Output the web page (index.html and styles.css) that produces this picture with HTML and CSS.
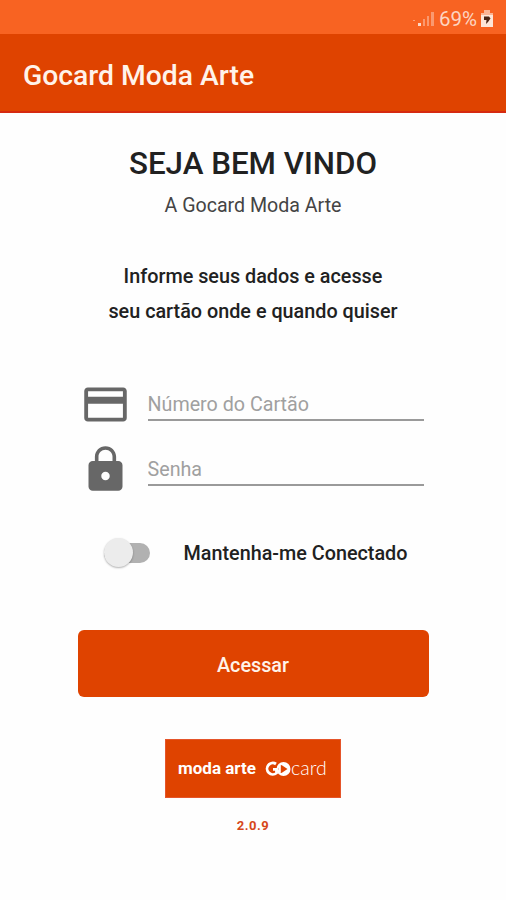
FILE: index.html
```html
<!DOCTYPE html>
<html lang="pt-BR">
<head>
    <meta charset="UTF-8">
    <meta name="viewport" content="width=device-width, initial-scale=1.0">
    <title>Gocard Moda Arte</title>
    <link rel="stylesheet" href="styles.css">
</head>
<body>
    <div class="status">
        <svg class="signal" width="24" height="18" viewBox="0 0 24 18">
            <path d="M1 10h2v1H1z" opacity=".4"/>
            <path d="M6 13h3v3H6z" opacity=".75"/>
            <path d="M11 9h2v7h-2zM15 6h2v10h-2zM19 2h3v14h-3z" opacity=".35"/>
        </svg>
        <span class="percent">69%</span>
        <svg class="battery" width="12" height="18" viewBox="0 0 12 18">
            <path d="M3 0h6v3h3v14H0V3h3z" fill="#fbb595"/>
            <path d="M0 5h12v12H0z" fill="#fde6d8"/>
            <path d="M3 6.500h5l1.500 2L7 12l-2 2 .5-4H3z" fill="#4a2414"/>
        </svg>
    </div>
    <header class="topbar">
        <h1>Gocard Moda Arte</h1>
    </header>
    <main class="container">
        <h2 class="welcome">SEJA BEM VINDO</h2>
        <p class="sub">A Gocard Moda Arte</p>
        <p class="info">Informe seus dados e acesse<br>seu cartão onde e quando quiser</p>
        <form class="login">
            <div class="field">
                <svg width="51" height="51" viewBox="0 0 24 24">
                    <path fill-rule="evenodd" d="M3.700 4h16.600c.95 0 1.700.75 1.700 1.700v12.600c0 .95-.75 1.700-1.700 1.700H3.700C2.750 20 2 19.250 2 18.300V5.700C2 4.750 2.750 4 3.700 4zM3.800 5.800v2.600h16.400V5.800zM3.800 11.700v6.500h16.400v-6.500z"/>
                </svg>
                <input type="text" placeholder="Número do Cartão" class="card-number">
            </div>
            <div class="field">
                <svg width="51" height="51" viewBox="0 0 24 24">
                    <path d="M18 8h-1V6c0-2.760-2.240-5-5-5S7 3.240 7 6v2H6c-1.100 0-2 .9-2 2v10c0 1.100.9 2 2 2h12c1.100 0 2-.9 2-2V10c0-1.100-.9-2-2-2zm-6 9c-1.100 0-2-.9-2-2s.9-2 2-2 2 .9 2 2-.9 2-2 2zm3.300-9H8.700V6c0-1.820 1.480-3.300 3.300-3.300s3.300 1.480 3.300 3.300v2z"/>
                </svg>
                <input type="password" placeholder="Senha" class="password">
            </div>
            <label class="keep">
                <span class="switch"><span class="thumb"></span></span>
                <span class="keep-text">Mantenha-me Conectado</span>
            </label>
            <button type="button">Acessar</button>
        </form>
        <div class="logo">
            <span class="brand">moda arte</span>
            <svg width="27" height="16" viewBox="0 0 27 16">
                <path d="M12 3A5.700 5.700 0 1 0 12.500 12V8.300H9" fill="none" stroke="#fff" stroke-width="2.800"/>
                <circle cx="19.500" cy="8" r="7" fill="#fff"/>
                <path d="M14.500 8a4.500 4.500 0 0 1 3-4v8a4.500 4.500 0 0 1-3-4zM17.500 4l6 4-6 4z" fill="#df4300"/>
                <path d="M14.800 4.500h2v7h-2z" fill="#fff"/>
            </svg>
            <span class="card">card</span>
        </div>
        <p class="version">2.0.9</p>
    </main>
</body>
</html>
```
FILE: styles.css
```css
*{
    box-sizing: border-box;
}
body{
    margin: 0;
    height: 900px;
    background: #fefefe;
    font-family: Roboto, "Liberation Sans", sans-serif;
    color: #212121;
}
h1,h2,p{
    margin: 0;
}
.status{
    height: 34px;
    background: #f86322;
    display: flex;
    align-items: center;
    justify-content: flex-end;
    padding: 4px 13px 0 0;
    color: #fdd5c0;
    fill: #fff;
}
.percent{
    font-size: 20.5px;
    line-height: 30px;
    margin: 0 4px 0 3px;
}
.topbar{
    height: 79px;
    background: #df4300;
    border-bottom: 2px solid #d62a10;
    padding: 5px 23px 0;
    display: flex;
    align-items: center;
    color: #fff3ea;
}
.topbar h1{
    font-size: 28.3px;
    font-weight: 500;
}
.container{
    display: flex;
    flex-direction: column;
    align-items: center;
    text-align: center;
    padding-top: 33px;
}
.welcome{
    font-size: 31.3px;
    font-weight: 500;
    line-height: 36px;
}
.sub{
    font-size: 19.6px;
    font-weight: 400;
    line-height: 24px;
    margin-top: 12px;
    color: #444;
}
.info{
    font-size: 19.8px;
    font-weight: 500;
    line-height: 35px;
    margin-top: 41px;
}
.login{
    width: 351px;
    margin-top: 50px;
}
.field{
    display: flex;
    align-items: center;
    height: 51px;
    margin: 0 5px 14px 2px;
}
.field svg{
    fill: #676767;
    flex: none;
}
.field input{
    width: 276px;
    height: 33px;
    margin-left: 17px;
    padding: 1px 0 0;
    border: 0;
    border-bottom: 2px solid #9a9a9a;
    outline: 0;
    background: none;
    font-family: inherit;
    font-size: 19.7px;
}
.field input::placeholder{
    color: #a0a0a0;
}
.keep{
    display: flex;
    align-items: center;
    height: 30px;
    margin: 43px 0 0 26px;
}
.switch{
    position: relative;
    width: 46px;
    height: 20px;
    border-radius: 10px;
    background: #b1b1b1;
}
.thumb{
    position: absolute;
    left: 0;
    top: -5px;
    width: 29px;
    height: 29px;
    border-radius: 50%;
    background: #ececec;
    box-shadow: 0 1px 2px rgba(0,0,0,.3);
}
.keep-text{
    font-size: 19.8px;
    font-weight: 500;
    margin-left: 34px;
}
.login button{
    display: block;
    width: 351px;
    height: 67px;
    margin-top: 62px;
    padding: 3px 0 0;
    border: 0;
    border-radius: 6px;
    background: #df4300;
    color: #fff3ea;
    font-family: inherit;
    font-size: 19.8px;
    font-weight: 500;
}
.logo{
    width: 176px;
    height: 59px;
    margin-top: 42px;
    background: #df4300;
    border: 1px solid #e5552a;
    display: flex;
    align-items: center;
    padding-left: 12px;
    color: #fff;
    white-space: nowrap;
}
.brand{
    font-size: 17px;
    font-weight: 700;
    width: 86px;
    text-align: left;
    margin-top: -2px;
}
.card{
    font-family: Lato, sans-serif;
    font-size: 19.5px;
    font-weight: 300;
    margin-top: -3px;
}
.version{
    margin-top: 19px;
    font-size: 13px;
    font-weight: 700;
    line-height: 18px;
    letter-spacing: .5px;
    color: #d6471a;
}
```
